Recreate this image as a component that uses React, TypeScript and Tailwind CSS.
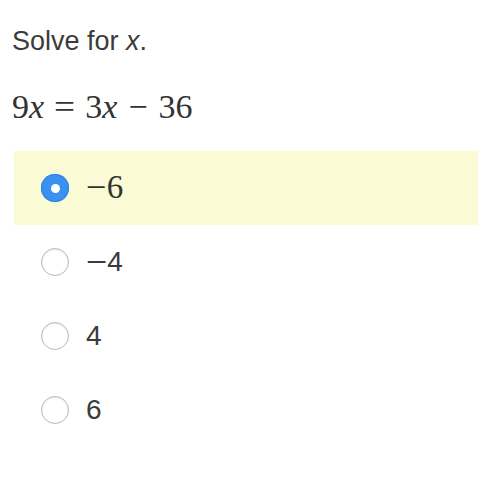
import React from "react";

const options = [
  { label: "6", minus: true, serif: true, selected: true },
  { label: "4", minus: true, serif: false, selected: false },
  { label: "4", minus: false, serif: false, selected: false },
  { label: "6", minus: false, serif: false, selected: false },
];

export default function App() {
  return (
    <div className="w-[478px] h-[478px] bg-white text-[#3b3b3b] overflow-hidden">
      <div className="pt-[24px] pl-[12px] text-[27px] leading-[34px] font-['Liberation_Sans',Arial,sans-serif]">
        Solve for <i>x</i>.
      </div>
      <div className="mt-[31px] pl-[12px] flex items-baseline gap-[11px] text-[34px] leading-[36px] font-['Liberation_Serif','Times_New_Roman',serif] text-[#333]">
        <span>
          9<i>x</i>
        </span>
        <span className="inline-block scale-x-110">=</span>
        <span>
          3<i>x</i>
        </span>
        <span>−</span>
        <span>36</span>
      </div>
      <div className="mt-[26px] ml-[14px] flex flex-col">
        {options.map((o, i) => (
          <div
            key={i}
            className={`h-[74px] flex items-center pl-[27px] ${o.selected ? "bg-[#fafad5]" : ""}`}
          >
            {o.selected ? (
              <div className="w-[28px] h-[28px] rounded-full bg-[#3b90f0] flex items-center justify-center shadow-[inset_0_0_0_1px_#2f83e6]">
                <div className="w-[9px] h-[9px] rounded-full bg-white" />
              </div>
            ) : (
              <div className="w-[28px] h-[28px] rounded-full bg-white border border-[#b8b8b8] shadow-[inset_0_1px_2px_rgba(0,0,0,0.08)]" />
            )}
            <span
              className={
                o.serif
                  ? "ml-[17px] text-[33px] font-['Liberation_Serif','Times_New_Roman',serif] text-[#333]"
                  : "ml-[17px] text-[28px] font-['Liberation_Sans',Arial,sans-serif] text-[#3b3b3b]"
              }
            >
              {o.minus ? (
                <span className={`inline-block origin-left ${o.serif ? "scale-x-[1.1] mr-[2px]" : "scale-x-[1.3] mr-[5px]"}`}>−</span>
              ) : null}
              {o.label}
            </span>
          </div>
        ))}
      </div>
    </div>
  );
}
